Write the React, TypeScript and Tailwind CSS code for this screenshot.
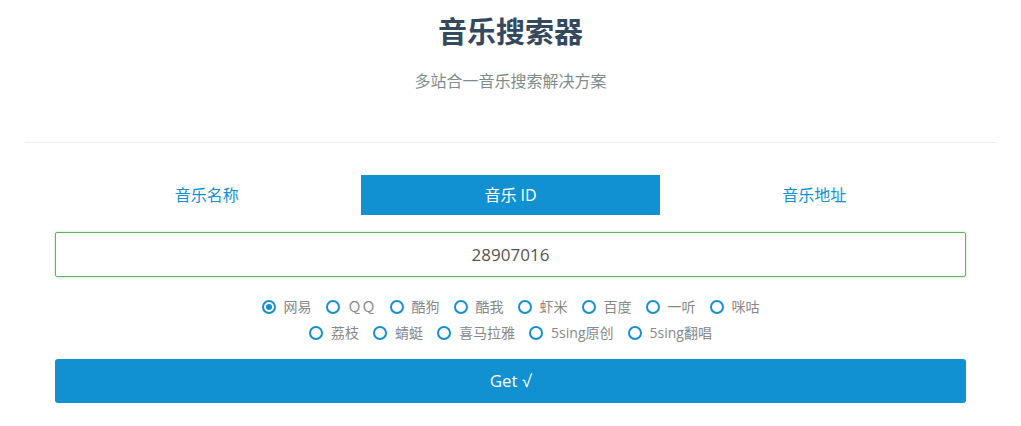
const font = { fontFamily: '"Open Sans", "Noto Sans CJK SC", sans-serif' };

const tabs = ['音乐名称', '音乐 ID', '音乐地址'];
const rowOne = ['网易', 'ＱＱ', '酷狗', '酷我', '虾米', '百度', '一听', '咪咕'];
const rowTwo = ['荔枝', '蜻蜓', '喜马拉雅', '5sing原创', '5sing翻唱'];

function Radio({ label, checked }: { label: string; checked?: boolean }) {
	return (
		<label className="flex items-center gap-[8px] mx-[7px]">
			<span className="w-[14px] h-[14px] rounded-full border-2 border-[#1190d2] flex items-center justify-center">
				{checked && <span className="w-[6px] h-[6px] rounded-full bg-[#1190d2]" />}
			</span>
			<span className="text-[14px] leading-[26px] text-[#888]">{label}</span>
		</label>
	);
}

export default function App() {
	return (
		<div className="w-[1021px] h-[426px] bg-white" style={font}>
			<div className="pt-[13px] text-center">
				<h1 className="text-[29px] leading-[38px] font-bold text-[#34495e]">音乐搜索器</h1>
				<p className="mt-[19px] text-[16px] leading-[22px] text-[#7f8c8d]">多站合一音乐搜索解决方案</p>
			</div>
			<div className="mx-[25px] mt-[50px] border-t border-[#eee]" />
			<div className="flex mx-[55px] mt-[32px]">
				{tabs.map((t, i) => (
					<div key={t} className="flex-1 flex">
						<div
							className={`flex-1 h-[40px] flex items-center justify-center text-[16px] ${
								i === 1 ? 'mx-[2px] bg-[#1190d2] text-white' : 'text-[#1190d2]'
							}`}>
							{t}
						</div>
					</div>
				))}
			</div>
			<div className="mx-[55px] mt-[17px]">
				<div className="h-[45px] border border-[#5cb85c] rounded-[2px] shadow-[0_0_3px_rgba(92,184,92,0.4)] flex items-center justify-center text-[17px] text-[#555]">
					28907016
				</div>
			</div>
			<div className="mt-[17px] flex justify-center">
				{rowOne.map((r, i) => (
					<Radio key={r} label={r} checked={i === 0} />
				))}
			</div>
			<div className="flex justify-center">
				{rowTwo.map((r) => (
					<Radio key={r} label={r} />
				))}
			</div>
			<div className="mx-[55px] mt-[13px]">
				<button className="w-full h-[44px] rounded-[3px] bg-[#1190d2] text-white text-[17px]" style={font}>
					Get √
				</button>
			</div>
		</div>
	);
}
